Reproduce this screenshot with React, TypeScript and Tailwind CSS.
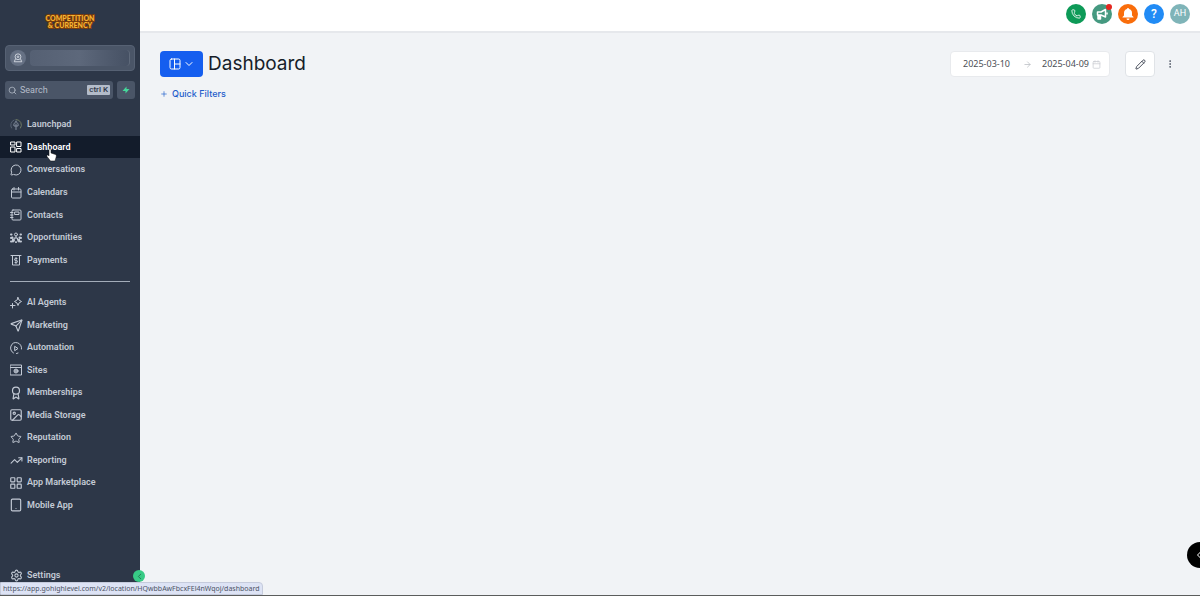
import { ReactNode } from "react";
import clsx from "clsx";
import {
  ArrowRight,
  Award,
  Calendar,
  ChevronDown,
  ChevronLeft,
  EllipsisVertical,
  Image,
  LayoutGrid,
  MessageCircle,
  Pencil,
  Phone,
  Plus,
  Search,
  Send,
  Settings,
  Star,
  Tablet,
  TrendingUp,
} from "lucide-react";

interface NavItemProps {
  label: string;
  icon: ReactNode;
  active?: boolean;
}

interface LineIconProps {
  children: ReactNode;
}

function LineIcon({ children }: LineIconProps) {
  return (
    <svg viewBox="0 0 24 24" width={12} height={12} fill="none" stroke="currentColor" strokeWidth={2} strokeLinecap="round" strokeLinejoin="round">
      {children}
    </svg>
  )
}

const mainItems: NavItemProps[] = [
  {
    label: "Launchpad",
    icon: (
      <LineIcon>
        <path d="M12 1a11 11 0 0 1 9 17" stroke="#6f7a63" />
        <path d="M3 18a11 11 0 0 1 5-16" stroke="#566273" />
        <path d="M12 5c4 3 5 6 4 9H8c-1-3 0-6 4-9zM12 10v11" stroke="#8590a0" />
      </LineIcon>
    ),
  },
  {
    label: "Dashboard",
    active: true,
    icon: (
      <LineIcon>
        <rect x="2" y="2" width="8" height="6" />
        <rect x="14" y="2" width="8" height="9" />
        <rect x="2" y="12" width="8" height="10" />
        <rect x="14" y="15" width="8" height="7" />
      </LineIcon>
    ),
  },
  { label: "Conversations", icon: <MessageCircle size={12} /> },
  {
    label: "Calendars",
    icon: (
      <LineIcon>
        <rect x="3" y="4" width="19" height="18" rx="2" />
        <path d="M3 10h19M8 1v5M17 1v5" />
      </LineIcon>
    ),
  },
  {
    label: "Contacts",
    icon: (
      <LineIcon>
        <rect x="4" y="2" width="18" height="20" rx="2" />
        <path d="M1 7h5M1 12h5M1 17h5M10 6h8v5h-8z" />
      </LineIcon>
    ),
  },
  {
    label: "Opportunities",
    icon: (
      <LineIcon>
        <circle cx="12" cy="5" r="3" />
        <path d="M9 12h6v5l-3 5-3-5zM12 8v4" />
        <path d="M2 5h1M2 12l3-1M2 19h1M6 15v4M22 5h-1M22 12l-3-1M22 19h-1M18 15v4" strokeWidth={4} />
      </LineIcon>
    ),
  },
  {
    label: "Payments",
    icon: (
      <LineIcon>
        <path d="M2 3h20M5 3v19h14V3" />
        <path d="M14 9h-3a2 2 0 0 0 0 4h2a2 2 0 0 1 0 4h-3M12 7v12" />
      </LineIcon>
    ),
  },
]

const toolItems: NavItemProps[] = [
  {
    label: "AI Agents",
    icon: (
      <LineIcon>
        <path d="M16 1l2 5 5 3-5 3-2 5-2-5-5-3 5-3zM5 13v9M1 17h9" />
      </LineIcon>
    ),
  },
  { label: "Marketing", icon: <Send size={13} /> },
  {
    label: "Automation",
    icon: (
      <LineIcon>
        <path d="M7 22A11 11 0 1 1 23 14M13 23l3-1" />
        <path d="M10 9l6 4-6 4z" />
      </LineIcon>
    ),
  },
  {
    label: "Sites",
    icon: (
      <LineIcon>
        <path d="M1 2h22v20H1zM1 7h22" />
        <circle cx="12" cy="14" r="4" />
        <path d="M9 14h6M12 11v6" />
      </LineIcon>
    ),
  },
  { label: "Memberships", icon: <Award size={14} /> },
  { label: "Media Storage", icon: <Image size={14} /> },
  { label: "Reputation", icon: <Star size={12} /> },
  { label: "Reporting", icon: <TrendingUp size={13} /> },
  { label: "App Marketplace", icon: <LayoutGrid size={14} /> },
  { label: "Mobile App", icon: <Tablet size={14} /> },
]

function NavItem({ label, icon, active }: NavItemProps) {
  return (
    <li className={clsx("relative flex flex-1", active ? "bg-[#131c2b] text-white" : "text-[#c3cad5]")}>
      <a href="#" className="flex flex-1 items-center gap-1 pl-[9px] text-[9px] leading-3 font-semibold">
        <span className="flex w-[14px] shrink-0 justify-center pt-px">{icon}</span>
        {label}
      </a>
      {active && (
        <svg className="absolute left-[46px] top-3 z-10" width="11" height="14" viewBox="0 0 22 28" fill="#fff" stroke="#111" strokeWidth={1}>
          <path d="M6 2c2-1 4 0 4 2v6l9 3c2 1 2 3 1 6l-2 7H9L2 17c-1-2 1-4 3-2l1 1z" />
        </svg>
      )}
    </li>
  )
}

function Sidebar() {
  return (
    <aside className="relative flex w-[140px] shrink-0 flex-col bg-[#2d3748] pb-[9px] font-['Roboto',sans-serif]">
      <div className="flex h-[45px] justify-center pt-[14px]">
        <svg width="50" height="18" viewBox="0 0 50 18" fill="#f6b532" stroke="#7a3c0c" strokeWidth={2} paintOrder="stroke" textAnchor="middle" className="font-['Lato',sans-serif] text-[7px] font-black">
          <text x="25" y="7">COMPETITION</text>
          <text x="25" y="14">&amp; CURRENCY</text>
        </svg>
      </div>

      <button aria-label="Switch account" className="mx-[5px] flex h-[26px] items-center gap-1 rounded-[4px] border border-[#566173] bg-[#4a5567] px-1">
        <span className="flex size-4 items-center justify-center rounded-full bg-[#667184] text-[#dde2e9]">
          <svg width="10" height="10" viewBox="0 0 24 24" fill="none" stroke="currentColor" strokeWidth={2} strokeLinejoin="round">
            <circle cx="12" cy="9" r="7" />
            <circle cx="12" cy="9" r="2" />
            <path d="M6 14l-3 7h18l-3-7" />
          </svg>
        </span>
        <span className="h-4 flex-1 rounded-sm border-r border-[#5f6a7b] bg-linear-to-r from-[#556073] via-[#5d687b] to-[#465164]" />
      </button>

      <div className="mx-[5px] mt-[10px] flex h-[18px] gap-1">
        <div className="flex min-w-0 flex-1 items-center gap-[3px] rounded-[3px] bg-[#4a5567] px-[3px] text-[#b5bdc9]">
          <Search size={9} className="shrink-0" />
          <input aria-label="Search" placeholder="Search" className="min-w-0 flex-1 bg-transparent text-[9px] leading-3 outline-none placeholder:text-[#b5bdc9]" />
          <kbd className="rounded-[1px] bg-[#b3bcca] px-[2px] font-['Roboto',sans-serif] text-[8px] leading-[10px] font-medium text-[#2d3748]">ctrl K</kbd>
        </div>
        <button aria-label="Quick actions" className="flex w-[18px] items-center justify-center rounded-[3px] bg-[#4a5567]">
          <svg width="8" height="8" viewBox="0 0 16 16" fill="#45d89b">
            <path d="M9 1v5h6l-8 9v-5H1z" />
          </svg>
        </button>
      </div>

      <nav>
        <ul className="mt-[14px] flex h-[158px] flex-col">
          {mainItems.map( item => <NavItem key={item.label} {...item} />)}
        </ul>
        <hr className="mx-[10px] mt-[10px] border-[#a3acb9]" />
        <ul className="mt-[9px] flex h-[225px] flex-col">
          {toolItems.map( item => <NavItem key={item.label} {...item} />)}
        </ul>
      </nav>

      <ul className="mt-auto flex h-[22px]">
        <NavItem label="Settings" icon={<Settings size={13} />} />
      </ul>

      <button aria-label="Collapse menu" className="absolute -right-[5px] bottom-[13px] flex size-3 items-center justify-center rounded-full bg-[#37ca85] text-[#1d5b45]">
        <ChevronLeft size={9} />
      </button>
    </aside>
  )
}

function TopBar() {
  return (
    <header className="flex h-[33px] justify-end gap-[6px] border-b-2 border-[#e6e8ec] bg-white pt-1 pr-[10px] text-white">
      <button aria-label="Phone" className="flex size-5 items-center justify-center rounded-full bg-[#0d9a57]">
        <Phone size={10} />
      </button>
      <button aria-label="Announcements" className="relative flex size-5 items-center justify-center rounded-full bg-[#459980]">
        <svg width="12" height="12" viewBox="0 0 24 24" fill="none" stroke="currentColor" strokeWidth={3} strokeLinejoin="round">
          <path d="M3 8h7l9-5v15l-9-4H3z" />
          <path d="M4 14v8h5v-8" fill="currentColor" />
          <path d="M22 9v4" />
        </svg>
        <span className="absolute top-0 right-0 size-[6px] rounded-full bg-[#e5271f]" />
      </button>
      <button aria-label="Notifications" className="flex size-5 items-center justify-center rounded-full bg-[#f96d0b]">
        <svg width="12" height="12" viewBox="0 0 24 24" fill="currentColor">
          <path d="M10 2a2 2 0 0 1 4 0c4 1 6 4 6 8v5l3 3v1H1v-1l3-3v-5c0-4 2-7 6-8zM9 21h6a3 3 0 0 1-6 0z" />
        </svg>
      </button>
      <button aria-label="Help" className="flex size-5 items-center justify-center rounded-full bg-[#218bf5] font-['Roboto',sans-serif] text-xs font-medium">?</button>
      <button className="flex size-5 items-center justify-center rounded-full bg-[#7fb4b8] font-['Roboto',sans-serif] text-[9px]">AH</button>
    </header>
  )
}

function DateRange() {
  return (
    <div className="flex h-[26px] w-[160px] items-center rounded-sm border border-[#e8eaed] bg-white pr-[9px] pl-3 text-[#4b4f56]">
      <input aria-label="Start date" defaultValue="2025-03-10" className="w-[50px] font-['Noto_Sans',sans-serif] text-[9px] leading-3 outline-none" />
      <ArrowRight size={9} className="mx-[10px] shrink-0 text-[#b8bcc2]" />
      <input aria-label="End date" defaultValue="2025-04-09" className="w-[50px] font-['Noto_Sans',sans-serif] text-[9px] leading-3 outline-none" />
      <Calendar size={9} className="ml-auto shrink-0 text-[#c9ccd1]" />
    </div>
  )
}

export default function App() {
  return (
    <div className="relative flex min-h-screen overflow-hidden border-b border-[#5b5d5c] bg-[#f1f3f6]">
      <Sidebar />

      <div className="flex min-w-0 flex-1 flex-col font-['Inter',sans-serif]">
        <TopBar />

        <main className="flex-1 pt-[18px] pr-[25px] pl-5">
          <div className="flex items-center">
            <button aria-label="Choose dashboard" className="flex h-[26px] w-[43px] items-center justify-center gap-[2px] rounded-sm bg-[#155eef] text-white">
              <LineIcon>
                <rect x="2" y="2" width="20" height="20" rx="3" />
                <path d="M11 2v20M11 12h11" />
              </LineIcon>
              <ChevronDown size={12} />
            </button>
            <h1 className="ml-[5px] text-[19px] leading-[26px] text-[#161d29]">Dashboard</h1>

            <div className="ml-auto flex items-center">
              <DateRange />
              <button aria-label="Edit dashboard" className="ml-[15px] flex h-[26px] w-[30px] items-center justify-center rounded-sm border border-[#e0e3e7] bg-white text-[#3b4250]">
                <Pencil size={11} />
              </button>
              <button aria-label="More options" className="ml-[10px] text-[#4b5260]">
                <EllipsisVertical size={10} />
              </button>
            </div>
          </div>

          <button className="mt-[11px] flex items-center gap-1 text-[9px] leading-3 font-medium text-[#1f5dcb]">
            <Plus size={8} />
            Quick Filters
          </button>
        </main>
      </div>

      <button aria-label="Open side panel" className="absolute -right-[13px] bottom-[27px] flex size-[26px] items-center rounded-full bg-black pl-[6px] text-white">
        <ChevronLeft size={12} />
      </button>

      <div className="absolute bottom-0 left-0 z-20 h-[13px] rounded-tr-sm border border-[#c5cbdc] bg-[#dde3f5] px-[2px] font-['Noto_Sans',sans-serif] text-[7px] leading-3 text-[#4c5365]">
        https://app.gohighlevel.com/v2/location/HQwbbAwFbcxFEl4nWqoj/dashboard
      </div>
    </div>
  )
}
